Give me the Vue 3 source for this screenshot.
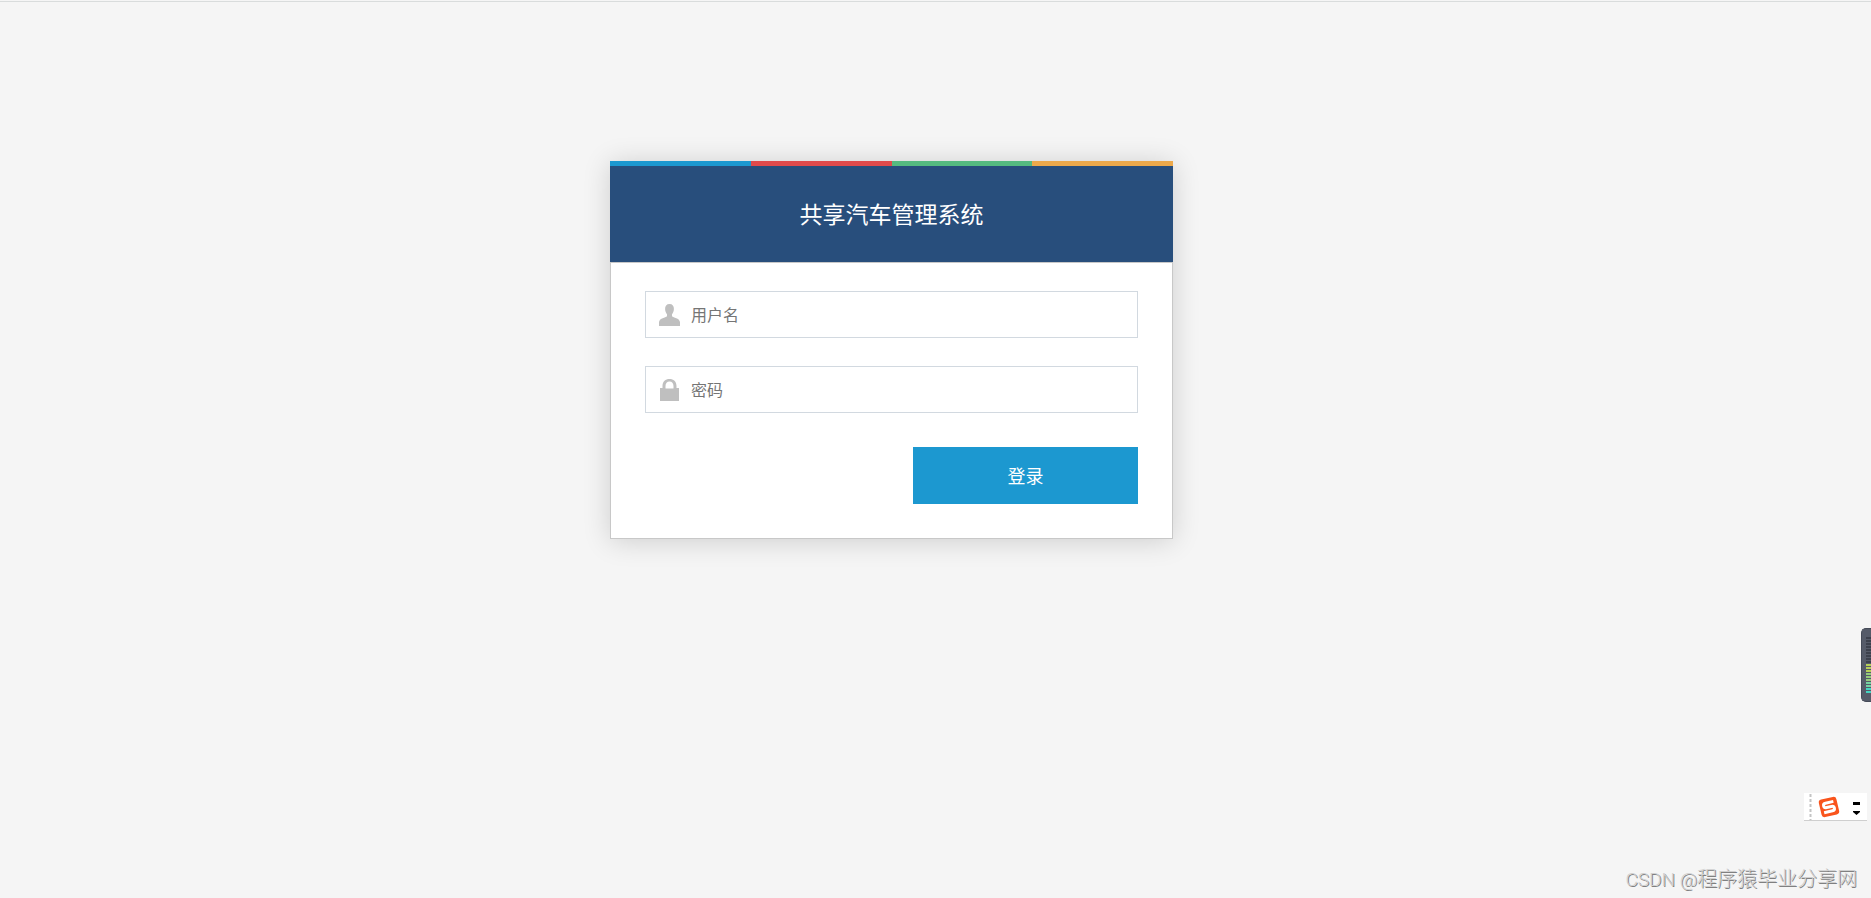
<script setup>
import { ref } from "vue";

const username = ref("");
const password = ref("");

const stripes = ["blue", "red", "green", "orange"];

// Level meter lines, from top to bottom
const idleLines = 9;
const levels = ["lime", "lime", "lime", "leaf", "leaf", "leaf", "mint", "mint", "aqua", "aqua"];

function login() {
  if (!username.value.trim() || !password.value) {
    return;
  }
  password.value = "";
}
</script>

<template>
  <div class="page">
    <main class="content">
      <section class="login-box">
        <div class="stripes">
          <span v-for="name in stripes" :key="name" :class="name"></span>
        </div>
        <header class="title">
          <h1>共享汽车管理系统</h1>
        </header>

        <form class="login-form" @submit.prevent="login">
          <!-- Username -->
          <div class="field">
            <label for="username" aria-label="用户名">
              <svg width="21" height="22" viewBox="0 0 21 22">
                <path
                  d="M10.500 0C13.500 0 15 2 14.900 5C14.800 7.500 14 9 13 10.200V12.300C14.500 14 20.300 14 21 18V22H0V18C.7 14 6.500 14 8 12.300V10.200C7 9 6.200 7.500 6.100 5C6 2 7.500 0 10.500 0Z"
                />
              </svg>
            </label>
            <input id="username" v-model="username" type="text" placeholder="用户名">
          </div>

          <!-- Password -->
          <div class="field">
            <label for="password" aria-label="密码">
              <svg width="21" height="22" viewBox="0 0 21 22">
                <path
                  d="M1 9H3.500V7C3.500 2.500 6.500 0 10.500 0S17.500 2.500 17.500 7V9H20V22H1ZM6.500 9.500H14.500V7C14.500 4.300 13 2.500 10.500 2.500S6.500 4.300 6.500 7Z"
                  fill-rule="evenodd"
                />
              </svg>
            </label>
            <input id="password" v-model="password" type="password" placeholder="密码">
          </div>

          <button type="submit" class="submit">登录</button>
        </form>
      </section>
    </main>

    <!-- Level meter docked to the right edge -->
    <div class="meter">
      <span v-for="n in idleLines" :key="'idle' + n" class="idle"></span>
      <span v-for="(level, i) in levels" :key="i" :class="level"></span>
    </div>

    <!-- Input method bar -->
    <div class="ime">
      <svg width="63" height="27" viewBox="0 0 63 27">
        <path d="M6.500 1V27" stroke="#c4c4c4" stroke-width="2" stroke-dasharray="3 2" />
        <g transform="rotate(-13 25 14)">
          <rect x="16" y="5" width="18" height="18" rx="3" fill="#f9541c" />
          <path
            d="M30.500 9.500H22.500Q20 9.500 20 11.700Q20 14 22.500 14H27.500Q30 14 30 16.300Q30 18.500 27.500 18.500H19"
            fill="none"
            stroke="#fff"
            stroke-width="3"
          />
        </g>
        <path d="M49 9H56V12H49ZM49 18H56V19L52.500 22L49 19Z" fill="#000" />
      </svg>
    </div>

    <p class="watermark"><span>CSDN @</span>程序猿毕业分享网</p>
  </div>
</template>

<style>
body {
  margin: 0;
  background: #f5f5f5;
}
</style>

<style scoped>
.page {
  position: relative;
  box-sizing: border-box;
  min-height: 100vh;
  border-top: 1px solid #f5f5f5;
  font-family: "Noto Sans CJK SC", sans-serif;
}

.content {
  display: flex;
  justify-content: center;
  padding: 159px 88px 40px 0;
  border-top: 1px solid #d9dcdc;
}

.login-box {
  width: 563px;
  max-width: 100%;
  background: #fff;
  box-shadow: 0 2px 26px rgba(0, 0, 0, 0.16);
}

.stripes {
  display: grid;
  grid-template-columns: repeat(4, 1fr);
  height: 5px;
}

.blue {
  background: #1c98d0;
}

.red {
  background: #e14a4b;
}

.green {
  background: #55bb80;
}

.orange {
  background: #eda94b;
}

.title {
  display: flex;
  align-items: center;
  justify-content: center;
  box-sizing: border-box;
  height: 96px;
  padding-bottom: 2px;
  background: #284e7c;
  color: #fff;
}

.title h1 {
  margin: 0;
  font-size: 23px;
  font-weight: 400;
  line-height: 32px;
}

.login-form {
  display: flex;
  flex-direction: column;
  padding: 28px 34px 34px;
  border: 1px solid #c8c8c8;
}

.field {
  display: flex;
  align-items: center;
  box-sizing: border-box;
  height: 47px;
  margin-bottom: 28px;
  padding-left: 13px;
  border: 1px solid #d2d9e0;
}

.field label {
  display: flex;
  margin-right: 11px;
}

.field svg {
  fill: #bfbfbf;
}

.field input {
  flex: 1;
  box-sizing: border-box;
  min-width: 0;
  height: 44px;
  padding: 0 0 2px;
  border: none;
  outline: none;
  background: transparent;
  color: #333;
  font-family: inherit;
  font-size: 16px;
}

.field input::placeholder {
  color: #757575;
}

.submit {
  align-self: flex-end;
  width: 225px;
  height: 57px;
  margin-top: 6px;
  padding: 0 0 2px;
  border: none;
  background: #1c98d0;
  color: #fff;
  font-family: inherit;
  font-size: 18px;
  cursor: pointer;
}

.meter {
  position: absolute;
  right: 0;
  bottom: 196px;
  display: flex;
  flex-direction: column;
  gap: 1px;
  box-sizing: border-box;
  width: 10px;
  height: 74px;
  padding: 8px 0 8px 4px;
  border: 1px solid #454b58;
  border-right: none;
  border-radius: 5px 0 0 5px;
  background: #555b69;
}

.meter span {
  height: 2px;
}

.idle {
  background: #3c414d;
}

.lime {
  background: #b5cf58;
}

.leaf {
  background: #94cb7c;
}

.mint {
  background: #72d2a1;
}

.aqua {
  background: #43d5c2;
}

.ime {
  position: absolute;
  right: 4px;
  bottom: 77px;
  display: flex;
  background: #fff;
  border-bottom: 1px solid #cfcfcf;
}

.watermark {
  position: absolute;
  right: 14px;
  bottom: 3px;
  margin: 0;
  color: #d0d0d0;
  font-size: 20px;
  font-weight: 300;
  line-height: 30px;
  text-shadow: 1px 1px 0 #808080;
}

.watermark span {
  font-family: Roboto, sans-serif;
  font-size: 19px;
}
</style>
